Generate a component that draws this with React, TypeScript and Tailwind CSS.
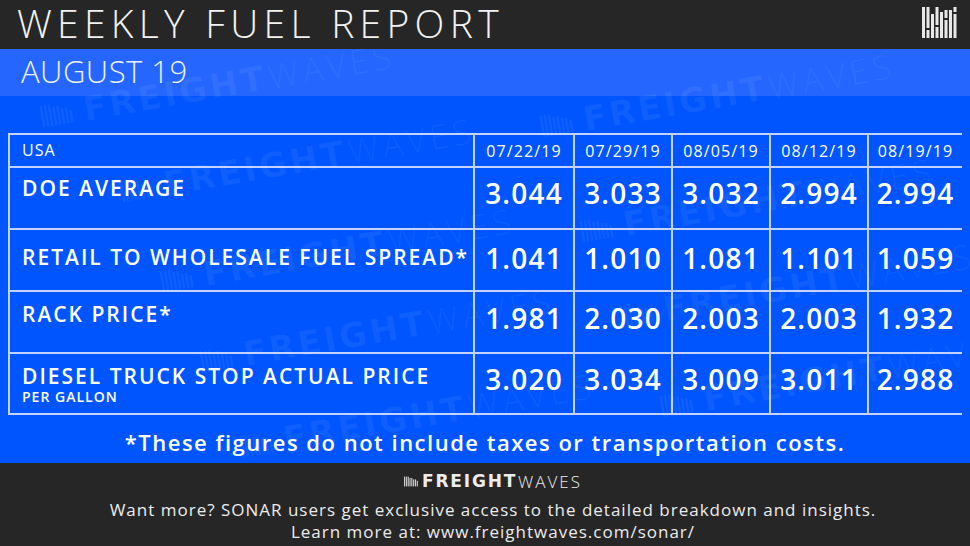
import React from "react";

const dates = ["07/22/19", "07/29/19", "08/05/19", "08/12/19", "08/19/19"];
const rows: { label: string; sub?: string; vals: string[]; pt: string; lpt: string }[] = [
  { label: "DOE AVERAGE", vals: ["3.044", "3.033", "3.032", "2.994", "2.994"], pt: "pt-[11px]", lpt: "pt-[10px]" },
  { label: "RETAIL TO WHOLESALE FUEL SPREAD*", vals: ["1.041", "1.010", "1.081", "1.101", "1.059"], pt: "pt-[14px]", lpt: "pt-[17px]" },
  { label: "RACK PRICE*", vals: ["1.981", "2.030", "2.003", "2.003", "1.932"], pt: "pt-[12px]", lpt: "pt-[12px]" },
  { label: "DIESEL TRUCK STOP ACTUAL PRICE", sub: "PER GALLON", vals: ["3.020", "3.034", "3.009", "3.011", "2.988"], pt: "pt-[11px]", lpt: "pt-[12px]" },
];

const font = { fontFamily: '"Open Sans", "Liberation Sans", sans-serif' };

function Bars({ className }: { className?: string }) {
  return (
    <svg viewBox="0 0 20 14" className={className} fill="currentColor">
      <rect x="0" y="0" width="1.6" height="14" />
      <rect x="2.6" y="0" width="1.6" height="14" />
      <rect x="5.2" y="0" width="1.6" height="14" />
      <rect x="7.8" y="2" width="1.6" height="12" />
      <rect x="10.4" y="2" width="1.6" height="12" />
      <rect x="13" y="4" width="1.6" height="10" />
      <rect x="15.6" y="4" width="1.6" height="10" />
      <rect x="18.2" y="6" width="1.6" height="8" />
    </svg>
  );
}

function Watermark({ x, y }: { x: number; y: number }) {
  return (
    <div
      aria-hidden="true"
      className="absolute flex items-center gap-[10px] whitespace-nowrap text-white/[0.06] origin-left -rotate-[10deg] select-none"
      style={{ left: x, top: y, ...font }}
    >
      <Bars className="w-[34px] h-[22px]" />
      <span className="text-[34px] font-extrabold tracking-[3px] leading-none" style={{ fontFamily: '"DejaVu Sans", sans-serif' }}>FREIGHT</span>
      <span className="text-[34px] font-light tracking-[4px] leading-none -ml-[8px]">WAVES</span>
    </div>
  );
}

const marks: [number, number][] = [
  [40, 100], [120, 175], [540, 110], [160, 265], [580, 215], [200, 345], [620, 300], [240, 430], [660, 390],
];

function TopLogo() {
  return (
    <svg viewBox="0 0 36 32" className="w-[36px] h-[32px]" fill="#e8e8e8">
      <rect x="0" y="1" width="3" height="31" />
      <rect x="4.5" y="1" width="3" height="21" />
      <rect x="4.5" y="24" width="3" height="8" />
      <rect x="9" y="8" width="3" height="24" />
      <rect x="13.5" y="1" width="3" height="18" />
      <rect x="13.5" y="21" width="3" height="11" />
      <rect x="18" y="6" width="3" height="26" />
      <rect x="22.5" y="4" width="3" height="8" />
      <rect x="22.5" y="14" width="3" height="18" />
      <rect x="27" y="4" width="3" height="28" />
      <rect x="31.5" y="1" width="3" height="5" />
      <rect x="31.5" y="8" width="3" height="24" />
    </svg>
  );
}

export default function App() {
  return (
    <div className="w-[970px] h-[546px] overflow-hidden bg-[#0055ff] flex flex-col relative" style={font}>
      {/* header */}
      <div className="h-[49px] shrink-0 bg-[#262626] flex items-center justify-between pl-[17px] pr-[12px] relative z-10">
        <div className="text-[39px] font-light text-[#f2f2f2] leading-[44px] -mt-[4px] tracking-[5.3px]">WEEKLY FUEL REPORT</div>
        <div className="-mt-[6px]">
          <TopLogo />
        </div>
      </div>
      {/* blue body */}
      <div className="flex-1 relative overflow-hidden">
        <div className="h-[47px] bg-[#2466ff] pl-[21px] pt-[7px]">
          <div className="text-[31px] font-light text-[#eef2ff] leading-none tracking-[0.5px]">AUGUST 19</div>
        </div>
        <div className="pl-[8px] pr-[8px] pt-[37px]">
          <div className="bg-[#c3d2ff] p-[2px] grid grid-cols-[463px_98px_96px_96px_96px_93px] gap-[2px] w-[954px]">
            <div className="bg-[#0055ff] h-[31px] pl-[12px] pt-[7px] text-[16px] text-white leading-none tracking-[1px]">USA</div>
            {dates.map((d) => (
              <div key={d} className="bg-[#0055ff] h-[31px] flex justify-center pt-[8px] text-[16px] text-white leading-none tracking-[1.1px]">
                {d}
              </div>
            ))}
            {rows.map((r, i) => (
              <React.Fragment key={r.label}>
                <div className={`bg-[#0055ff] ${i === 3 ? "h-[59px]" : "h-[60px]"} pl-[12px] ${r.lpt} text-white`}>
                  <div className="text-[21px] font-semibold leading-none tracking-[2px]">{r.label}</div>
                  {r.sub && <div className="text-[14px] font-semibold leading-none tracking-[1px] mt-[3px]">{r.sub}</div>}
                </div>
                {r.vals.map((v, j) => (
                  <div key={j} className={`bg-[#0055ff] ${i === 3 ? "h-[59px]" : "h-[60px]"} flex justify-center ${r.pt} text-white`}>
                    <div className="text-[28px] font-semibold leading-none tracking-[1.2px]">{v}</div>
                  </div>
                ))}
              </React.Fragment>
            ))}
          </div>
          <div className="text-center text-white text-[22px] font-semibold leading-none tracking-[1.5px] pt-[16px]">
            *These figures do not include taxes or transportation costs.
          </div>
        </div>
        <div className="absolute inset-0 pointer-events-none" aria-hidden="true">
          {marks.map(([x, y], i) => (
            <Watermark key={i} x={x} y={y - 49} />
          ))}
        </div>
      </div>
      {/* footer */}
      <div className="h-[83px] shrink-0 bg-[#262626] flex flex-col items-center pt-[10px] pl-[16px] text-[#ececec]">
        <div className="flex items-center gap-[4px] h-[16px]">
          <Bars className="w-[14px] h-[11px] text-[#cfcfcf]" />
          <span className="text-[17px] font-extrabold leading-none tracking-[1.8px]" style={{ fontFamily: '"DejaVu Sans", sans-serif' }}>FREIGHT</span>
          <span className="text-[17px] font-light leading-none tracking-[2px] -ml-[3px]">WAVES</span>
        </div>
        <div className="text-[17px] leading-none mt-[12px] tracking-[1px]">
          Want more? SONAR users get exclusive access to the detailed breakdown and insights.
        </div>
        <div className="text-[17px] leading-none mt-[5px] tracking-[1px]">Learn more at: www.freightwaves.com/sonar/</div>
      </div>
    </div>
  );
}
